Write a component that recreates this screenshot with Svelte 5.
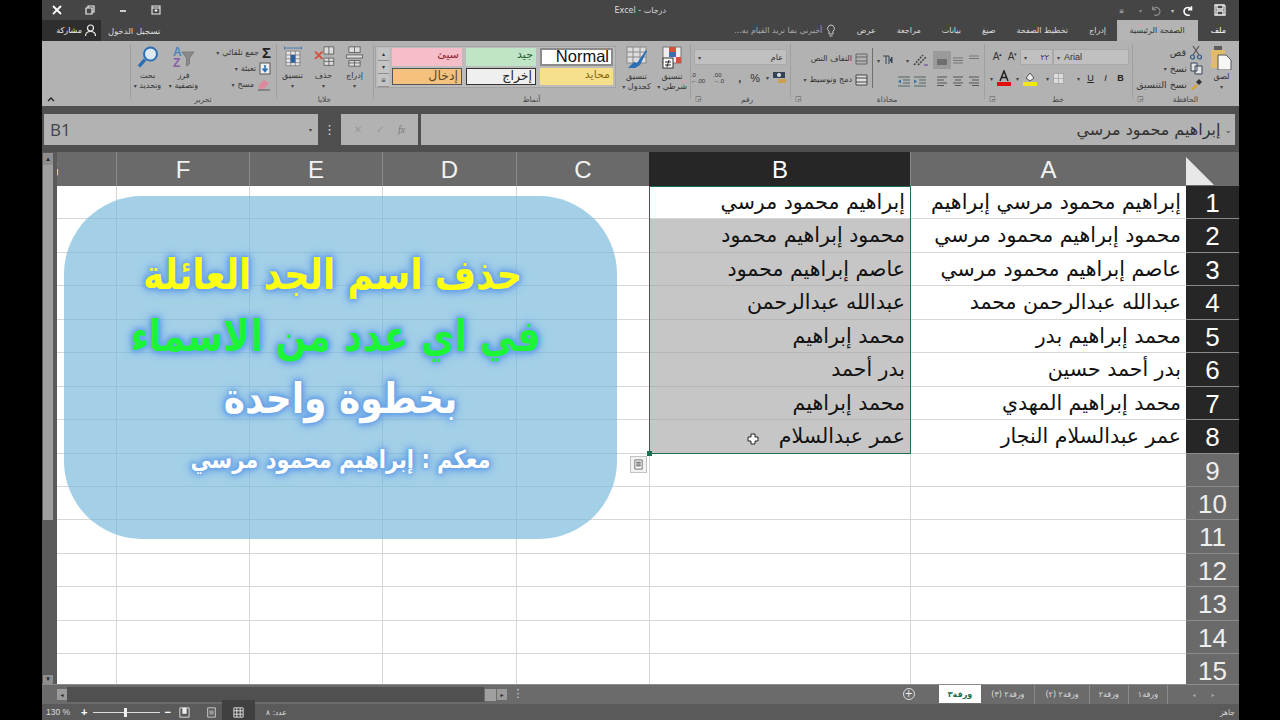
<script>
	const tabs = ["الصفحة الرئيسية", "إدراج", "تخطيط الصفحة", "صيغ", "بيانات", "مراجعة", "عرض"];
	const colsRtl = [
		{ name: "A", width: 276 },
		{ name: "B", width: 261, selected: true },
		{ name: "C", width: 133 },
		{ name: "D", width: 134 },
		{ name: "E", width: 133 },
		{ name: "F", width: 133 },
		{ name: "G", width: 133 },
	];
	const names = [
		["إبراهيم محمود مرسي إبراهيم", "إبراهيم محمود مرسي"],
		["محمود إبراهيم محمود مرسي", "محمود إبراهيم محمود"],
		["عاصم إبراهيم محمود مرسي", "عاصم إبراهيم محمود"],
		["عبدالله عبدالرحمن محمد", "عبدالله عبدالرحمن"],
		["محمد إبراهيم بدر", "محمد إبراهيم"],
		["بدر أحمد حسين", "بدر أحمد"],
		["محمد إبراهيم المهدي", "محمد إبراهيم"],
		["عمر عبدالسلام النجار", "عمر عبدالسلام"],
	];
	const rows = Array.from({ length: 15 }, (_, i) => i + 1);
	const sheets = ["ورقة١", "ورقة٢", "ورقة٢ (٢)", "ورقة٢ (٣)"];
	const styleCells = [
		{ label: "Normal", cls: "normal" },
		{ label: "جيد", cls: "good" },
		{ label: "سيئ", cls: "bad" },
		{ label: "محايد", cls: "neutral" },
		{ label: "إخراج", cls: "output" },
		{ label: "إدخال", cls: "input" },
	];
</script>

<div class="stage">
	<div class="excel" dir="rtl">
		<header class="titlebar">
			<div class="qat">
				<svg width="14" height="14" viewBox="0 0 14 14"><path d="M2 2h9l1 1v9H2z M4 2v4h6V2 M4 12V8h6v4" fill="none" stroke="#eee" stroke-width="1.3"/></svg>
				<svg class="redo" width="14" height="13" viewBox="0 0 16 14"><path d="M12 6a4.500 4.500 0 1 0-2 6 M12 2v4H8" fill="none" stroke="#fff" stroke-width="1.8"/></svg>
				<span class="caret">▾</span>
				<svg class="undo" width="14" height="13" viewBox="0 0 16 14"><path d="M4 6a4.500 4.500 0 1 1 2 6 M4 2v4h4" fill="none" stroke="#888" stroke-width="1.400"/></svg>
				<span class="caret dim">▾</span>
				<span class="caret cust">≡</span>
			</div>
			<div class="doc">درجات - Excel</div>
			<div class="winbtns">
				<svg width="12" height="12" viewBox="0 0 12 12"><path d="M2 2h8v8H2z M2 4h8 M6 5v3 M4.500 6.500h3" fill="none" stroke="#eee" stroke-width="1.100"/></svg>
				<svg width="12" height="12" viewBox="0 0 12 12"><path d="M3 7h6" stroke="#eee" stroke-width="1.600"/></svg>
				<svg width="12" height="12" viewBox="0 0 12 12"><path d="M2 4h6v6H2z M4 4V2h6v6H8" fill="none" stroke="#eee" stroke-width="1.200"/></svg>
				<svg width="12" height="12" viewBox="0 0 12 12"><path d="M2 2l8 8M10 2l-8 8" stroke="#fff" stroke-width="1.800"/></svg>
			</div>
		</header>

		<nav class="tabsrow">
			<span class="tab file">ملف</span>
			{#each tabs as t, i}
				<span class="tab" class:active={i === 0}>{t}</span>
			{/each}
			<span class="tell">
				<svg width="10" height="13" viewBox="0 0 10 13"><path d="M5 1a3.500 3.500 0 0 0-2 6.300V10h4V7.300A3.500 3.500 0 0 0 5 1z M3.500 12h3" fill="none" stroke="#ccc"/></svg>
				أخبرني بما تريد القيام به...
			</span>
			<span class="signin">تسجيل الدخول</span>
			<span class="share">
				<svg width="13" height="13" viewBox="0 0 13 13"><circle cx="6.500" cy="4" r="3" fill="none" stroke="#eee" stroke-width="1.200"/><path d="M1.500 12c0-3 2-4.500 5-4.500s5 1.500 5 4.500" fill="none" stroke="#eee" stroke-width="1.200"/></svg>
				مشاركة
			</span>
		</nav>

		<section class="ribbon">
			<div class="group g-clip">
				<div class="body">
					<div class="big paste">
						<svg width="21" height="24" viewBox="0 0 21 24"><rect x="0" y="4" width="14" height="18" fill="#e0bb6a"/><rect x="3" y="0" width="8" height="4" fill="#5c5c5c"/><path d="M7 9h8l5 5v10H7z" fill="#f6f6f6" stroke="#555"/></svg>
						<span>لصق</span><span class="caret">▾</span>
					</div>
					<div class="stack">
						<div class="line">
							<svg width="14" height="15" viewBox="0 0 14 15"><path d="M4 1l6 9M10 1L4 10" stroke="#555" stroke-width="1.200"/><circle cx="3.500" cy="12" r="2" fill="none" stroke="#2f5a86" stroke-width="1.200"/><circle cx="10.500" cy="12" r="2" fill="none" stroke="#2f5a86" stroke-width="1.200"/></svg>
							قص
						</div>
						<div class="line">
							<svg width="13" height="13" viewBox="0 0 13 13"><path d="M1 1h6v8H1z M5 4h7v8H5z" fill="#e4e4e4" stroke="#345"/></svg>
							نسخ <span class="caret">▾</span>
						</div>
						<div class="line">
							<svg width="13" height="13" viewBox="0 0 13 13"><path d="M1 11l5-5 2 2-5 4z" fill="#d6a235"/><path d="M6 4l3-3 3 3-3 3z" fill="#333"/></svg>
							نسخ التنسيق
						</div>
					</div>
				</div>
				<div class="glabel">الحافظة</div>
				<span class="launcher">◲</span>
			</div>

			<div class="group g-font">
				<div class="body col">
					<div class="row r1">
						<div class="combo fontname"><span>Arial</span><span class="caret">▾</span></div>
						<div class="combo fontsize"><span>٢٢</span><span class="caret">▾</span></div>
						<span class="grow" dir="ltr">A<sup>▾</sup></span>
						<span class="grow" dir="ltr">A<sup>▴</sup></span>
					</div>
					<div class="row r2">
						<b class="fmt">B</b>
						<i class="fmt ital">I</i>
						<u class="fmt">U</u><span class="caret">▾</span>
						<svg class="bord" width="13" height="13" viewBox="0 0 13 13"><path d="M1.500 1.500h10v10h-10z M6.500 1.500v10 M1.500 6.500h10" fill="#ddd" stroke="#888" stroke-dasharray="1 1"/></svg>
						<span class="caret">▾</span>
						<svg class="fill" width="16" height="16" viewBox="0 0 16 16"><path d="M4 8l4-5 4 5-4 3z" fill="#eee" stroke="#555"/><rect x="1" y="12" width="14" height="4" fill="#f0e61e"/></svg>
						<span class="caret">▾</span>
						<svg width="16" height="16" viewBox="0 0 16 16"><path d="M4 11L8 1l4 10 M5.500 7.500h5" fill="none" stroke="#222" stroke-width="1.500"/><rect x="1" y="12" width="14" height="4" fill="#e01010"/></svg>
						<span class="caret">▾</span>
					</div>
				</div>
				<div class="glabel">خط</div>
				<span class="launcher">◲</span>
			</div>

			<div class="group g-align">
				<div class="body">
					<div class="align-grid">
						<div class="row r1a">
							<svg width="12" height="10" viewBox="0 0 12 10"><path d="M1 1h10M1 3.500h10" stroke="#777"/></svg>
							<svg width="12" height="10" viewBox="0 0 12 10"><path d="M1 3h10M1 5.500h10M1 8h10" stroke="#777"/></svg>
							<span class="on"><svg width="12" height="10" viewBox="0 0 12 10"><path d="M1 5h10M1 7h10M1 9h10" stroke="#444"/></svg></span>
							<svg class="orient" width="18" height="14" viewBox="0 0 18 14"><path d="M3 12L12 2 M7 12l8-8" stroke="#444" stroke-width="1.600" stroke-dasharray="2 1"/><path d="M13 12h4" stroke="#7a5ca8" stroke-width="1.400"/></svg>
							<span class="caret">▾</span>
							<svg class="rtl" width="12" height="10" viewBox="0 0 12 10"><path d="M1 1h6M4 1v8M7 1v8M10 2v6l-2-3z" stroke="#345" fill="#345"/></svg>
							<span class="caret">▾</span>
						</div>
						<div class="row r2a">
							<svg width="12" height="10" viewBox="0 0 12 10"><path d="M1 1h10M4 4h7M1 7h10M4 9.500h7" stroke="#555"/></svg>
							<svg width="12" height="10" viewBox="0 0 12 10"><path d="M1 1h10M3 4h6M1 7h10M3 9.500h6" stroke="#555"/></svg>
							<svg width="12" height="10" viewBox="0 0 12 10"><path d="M1 1h10M1 4h7M1 7h10M1 9.500h7" stroke="#555"/></svg>
							<svg class="indent first" width="14" height="11" viewBox="0 0 14 11"><path d="M1 1h12M6 4h7M6 7h7M1 10h12" stroke="#566"/><path d="M1 3.500v4l3-2z" fill="#2a6fb5"/></svg>
							<svg class="indent" width="14" height="11" viewBox="0 0 14 11"><path d="M1 1h12M6 4h7M6 7h7M1 10h12" stroke="#566"/><path d="M4 3.500v4l-3-2z" fill="#2a6fb5"/></svg>
						</div>
					</div>
					<div class="wrapcol">
						<div class="line">
							<svg width="13" height="12" viewBox="0 0 13 12"><path d="M1 1h11v10H1z M1 4h11 M1 8h11" fill="none" stroke="#666"/></svg>
							التفاف النص
						</div>
						<div class="line">
							<svg width="13" height="12" viewBox="0 0 13 12"><path d="M1 1h11v10H1z M1 4h11 M1 8h11" fill="#ddd" stroke="#444"/></svg>
							دمج وتوسيط <span class="caret">▾</span>
						</div>
					</div>
				</div>
				<div class="glabel">محاذاة</div>
				<span class="launcher">◲</span>
			</div>

			<div class="group g-num">
				<div class="body col">
					<div class="combo numfmt"><span>عام</span><span class="caret">▾</span></div>
					<div class="row r2n">
						<svg width="15" height="13" viewBox="0 0 15 13"><rect x="1" y="1" width="12" height="6" fill="#345"/><circle cx="7" cy="4" r="2" fill="#dde"/><rect x="6" y="8" width="8" height="4" fill="#cda14b"/></svg>
						<span class="caret">▾</span>
						<span class="pct">%</span>
						<span class="comma">,</span>
						<span class="dec">.00<br />→.0</span>
						<span class="dec">.0<br />←.00</span>
					</div>
				</div>
				<div class="glabel">رقم</div>
				<span class="launcher">◲</span>
			</div>

			<div class="group g-style">
				<div class="body">
					<div class="big cf">
						<svg width="20" height="23" viewBox="0 0 20 23"><rect x="1" y="1" width="18" height="16" fill="#eee" stroke="#777"/><rect x="7" y="1" width="7" height="5" fill="#d0533a"/><rect x="7" y="6" width="7" height="5" fill="#3d6eb0"/><rect x="14" y="11" width="5" height="6" fill="#d0533a"/><rect x="1" y="12" width="10" height="10" fill="#fff" stroke="#333"/><path d="M3 16h6M3 19h6M7 14l-2 7" stroke="#222"/></svg>
						<span>تنسيق</span><span>شرطي <span class="caret">▾</span></span>
					</div>
					<div class="big ft">
						<svg width="22" height="23" viewBox="0 0 22 23"><rect x="1" y="1" width="19" height="16" fill="#ddd" stroke="#888"/><path d="M1 6h19M1 11h19M7 1v16M14 1v16" stroke="#888"/><path d="M2 22l6-6 3 1 9-13 1 1-7 14-5 3z" fill="#2a6fb5"/></svg>
						<span>تنسيق</span><span>كجدول <span class="caret">▾</span></span>
					</div>
					<div class="gallery">
						<div class="cells">
							{#each styleCells as c}
								<div class="cellstyle {c.cls}">{c.label}</div>
							{/each}
						</div>
						<div class="galscroll">
							<span>▴</span><span>▾</span><span>≡</span>
						</div>
					</div>
				</div>
				<div class="glabel">أنماط</div>
			</div>

			<div class="group g-cells">
				<div class="body">
					<div class="big cellbtn">
						<svg width="21" height="21" viewBox="0 0 26 26"><path d="M6 1h14v7H6z M13 1v7 M3 11h20v4H3z M6 18h14v7H6z M13 18v7 M6 21h14" fill="#ddd" stroke="#555"/></svg>
						<span>إدراج</span><span class="caret">▾</span>
					</div>
					<div class="big cellbtn">
						<svg width="22" height="21" viewBox="0 0 26 26"><path d="M13 1h12v9H13z M19 1v9 M13 15h12v9H13z M19 15v9 M13 19h12" fill="#ddd" stroke="#555"/><path d="M2 7l9 9M11 7l-9 9" stroke="#d0533a" stroke-width="2.400"/></svg>
						<span>حذف</span><span class="caret">▾</span>
					</div>
					<div class="big cellbtn">
						<svg width="20" height="21" viewBox="0 0 26 26"><path d="M4 6h18v19H4z M4 11h18 M4 16h18 M4 21h18 M10 6v19 M16 6v19" fill="#e5e5e5" stroke="#777"/><rect x="10" y="11" width="6" height="10" fill="#2a5f9e"/><path d="M2 2h22M2 0v4M24 0v4" stroke="#2a6fb5"/></svg>
						<span>تنسيق</span><span class="caret">▾</span>
					</div>
				</div>
				<div class="glabel">خلايا</div>
			</div>

			<div class="group g-edit">
				<div class="body">
					<div class="stack edit">
						<div class="line">
							<span class="sigma">Σ</span>
							جمع تلقائي <span class="caret">▾</span>
						</div>
						<div class="line">
							<svg width="12" height="13" viewBox="0 0 12 13"><rect x="1" y="1" width="10" height="11" fill="#eee" stroke="#555"/><path d="M6 3v6M3.500 6.500L6 9.500l2.500-3" stroke="#2a6fb5" stroke-width="1.600" fill="none"/></svg>
							تعبئة <span class="caret">▾</span>
						</div>
						<div class="line">
							<svg width="14" height="13" viewBox="0 0 14 13"><path d="M1 8l6-6 5 3-5 6H3z" fill="#dd8a9c"/><path d="M1 12h12" stroke="#555"/></svg>
							مسح <span class="caret">▾</span>
						</div>
					</div>
					<div class="big sort">
						<svg width="22" height="22" viewBox="0 0 22 22" dir="ltr"><text x="0" y="10" class="az a">A</text><text x="0" y="21" class="az z">Z</text><path d="M9 6h12l-4.500 6v6l-3 2v-8z" fill="#8a8a8a" stroke="#666" stroke-width="0.600"/></svg>
						<span>فرز</span><span>وتصفية <span class="caret">▾</span></span>
					</div>
					<div class="big find">
						<svg width="22" height="22" viewBox="0 0 22 22"><circle cx="13.500" cy="8" r="6.500" fill="#dfe9f2" stroke="#2a6fb5" stroke-width="2"/><path d="M8 13.500l-6 7" stroke="#2a6fb5" stroke-width="3.400"/></svg>
						<span>بحث</span><span>وتحديد <span class="caret">▾</span></span>
					</div>
				</div>
				<div class="glabel">تحرير</div>
			</div>

			<svg class="collapse" width="8" height="6" viewBox="0 0 8 6"><path d="M1 5l3-3 3 3" fill="none" stroke="#222" stroke-width="1.400"/></svg>
		</section>

		<section class="formulabar">
			<div class="fx-input">
				<span class="fx-text">إبراهيم محمود مرسي</span>
				<span class="caret">⌄</span>
			</div>
			<div class="fx-btns">
				<span class="fx">fx</span><span>✓</span><span>✕</span>
			</div>
			<div class="fx-dots">⋮</div>
			<div class="namebox" dir="ltr"><span>B1</span><span class="caret">▾</span></div>
		</section>

		<section class="sheet">
			<div class="gridwrap">
				<div class="colhead">
					<div class="corner"><i></i></div>
					{#each colsRtl as c}
						<div class="ch" class:sel={c.selected} style="width:{c.width}px">{c.name}</div>
					{/each}
				</div>
				<div class="rows">
					{#each rows as r}
						<div class="rw">
							<div class="rh" class:sel={r <= 8}>{r}</div>
							<div class="c a" style="width:{colsRtl[0].width}px">{names[r - 1]?.[0] ?? ""}</div>
							<div
								class="c b"
								class:filled={r >= 2 && r <= 8}
								style="width:{colsRtl[1].width}px"
							>{names[r - 1]?.[1] ?? ""}</div>
							{#each colsRtl.slice(2) as c}
								<div class="c" style="width:{c.width}px"></div>
							{/each}
						</div>
					{/each}
				</div>

				<div class="selbox"><i></i></div>
				<svg class="cursor" width="12" height="12" viewBox="0 0 12 12"><path d="M4 1h4v3h3v4H8v3H4V8H1V4h3z" fill="#fff" stroke="#222"/></svg>
				<div class="flash">
					<svg width="11" height="11" viewBox="0 0 12 12"><path d="M2 1h8v10H2z" fill="#fff" stroke="#666"/><path d="M3.500 3.500h5M3.500 5.500h5M3.500 7.500h5" stroke="#333"/></svg>
				</div>

				<div class="shape">
					<p class="t1">حذف اسم الجد العائلة</p>
					<p class="t2">في اي عدد من الاسماء</p>
					<p class="t3">بخطوة واحدة</p>
					<p class="t4">معكم : إبراهيم محمود مرسي</p>
				</div>
			</div>

			<aside class="vscroll" dir="ltr">
				<span class="sbtn">▴</span>
				<div class="vthumb"></div>
				<span class="sbtn end">▾</span>
			</aside>
		</section>

		<section class="sheettabs">
			<div class="nav"><span>▸</span><span>◂</span></div>
			{#each sheets as s}
				<span class="sheet-tab" class:wide={s.length > 5}>{s}</span>
			{/each}
			<span class="sheet-tab current">ورقة٣</span>
			<span class="plus">+</span>
			<span class="hdots">⋮</span>
			<div class="hscroll">
				<span class="btn">▸</span>
				<div class="hthumb"></div>
				<div class="htrack"></div>
				<span class="btn">◂</span>
			</div>
		</section>

		<footer class="status">
			<span class="ready">جاهز</span>
			<span class="count">عدد: ٨</span>
			<div class="views">
				<span class="view on"><svg width="13" height="13" viewBox="0 0 13 13"><path d="M1 1h11v11H1z M1 4.500h11M1 8.500h11M4.500 1v11M8.500 1v11" fill="none" stroke="#eee"/></svg></span>
				<span class="view"><svg width="13" height="13" viewBox="0 0 13 13"><path d="M2 1h9v11H2z" fill="none" stroke="#ddd"/><rect x="4" y="4" width="5" height="5" fill="#999"/></svg></span>
				<span class="view"><svg width="13" height="13" viewBox="0 0 13 13"><path d="M1 1h11v11H1z" fill="none" stroke="#eee"/><rect x="4" y="1" width="5" height="7" fill="#eee"/></svg></span>
			</div>
			<div class="zoom" dir="ltr">
				<span class="pctlabel">130 %</span>
				<b>+</b>
				<div class="slider"><i></i></div>
				<b>−</b>
			</div>
		</footer>
	</div>
</div>

<style>
	:global(body) {
		margin: 0;
		background: #000;
	}
	.stage {
		width: 1280px;
		height: 720px;
		padding: 0 41px 0 42px;
		box-sizing: border-box;
		background: #000;
		overflow: hidden;
	}
	.excel {
		width: 1197px;
		height: 720px;
		display: flex;
		flex-direction: column;
		background: #454545;
		font-family: "DejaVu Sans", "Liberation Sans", sans-serif;
		color: #222;
	}
	svg {
		display: block;
		flex: none;
	}
	.caret {
		font-size: 6px;
		color: #444;
	}

	/* title bar */
	.titlebar {
		height: 20px;
		flex: none;
		display: flex;
		align-items: center;
		justify-content: space-between;
		padding: 0 12px 0 9px;
		position: relative;
		color: #ddd;
		font-size: 8px;
	}
	.qat {
		display: flex;
		align-items: center;
		gap: 7px;
		direction: rtl;
	}
	.qat .caret {
		color: #ccc;
	}
	.qat .redo {
		margin-right: 11px;
	}
	.qat .undo {
		margin-right: 1px;
	}
	.qat .caret.dim {
		color: #888;
	}
	.qat .cust {
		margin-right: 8px;
	}
	.doc {
		position: absolute;
		left: 574px;
		width: 50px;
		white-space: nowrap;
		text-align: center;
	}
	.winbtns {
		display: flex;
		gap: 21px;
	}

	/* tabs */
	.tabsrow {
		height: 21px;
		flex: none;
		display: flex;
		align-items: center;
		font-size: 8px;
		color: #ddd;
		white-space: nowrap;
	}
	.tab {
		padding: 0 10.500px;
		height: 100%;
		display: flex;
		align-items: center;
	}
	.tab.file {
		padding: 0 13px;
		color: #fff;
	}
	.tab.active {
		background: #b4b4b4;
		color: #333;
		padding: 0 13px;
	}
	.tell {
		display: flex;
		align-items: center;
		gap: 4px;
		margin-right: 10px;
		color: #aaa;
	}
	.signin {
		margin-right: auto;
		padding-left: 7px;
		color: #ddd;
		font-size: 8.500px;
	}
	.share {
		display: flex;
		align-items: center;
		gap: 2px;
		height: 100%;
		width: 59px;
		box-sizing: border-box;
		padding-right: 4px;
		background: #2e2e2e;
		color: #eee;
	}

	/* ribbon */
	.ribbon {
		height: 65px;
		flex: none;
		display: flex;
		background: #b2b2b2;
		font-size: 8px;
		color: #333;
		white-space: nowrap;
		position: relative;
	}
	.group {
		display: flex;
		flex-direction: column;
		position: relative;
		box-sizing: border-box;
		flex: none;
	}
	.group::after {
		content: "";
		position: absolute;
		left: 0;
		top: 3px;
		bottom: 7px;
		width: 1px;
		background: #a0a0a0;
	}
	.body {
		flex: 1;
		display: flex;
		min-height: 0;
	}
	.body.col {
		flex-direction: column;
	}
	.glabel {
		height: 13px;
		flex: none;
		text-align: center;
		font-size: 7.500px;
		line-height: 13px;
		color: #444;
	}
	.launcher {
		position: absolute;
		left: 5px;
		bottom: 2px;
		font-size: 7px;
		line-height: 10px;
		color: #555;
	}
	.g-clip { width: 107px; }
	.g-font { width: 148px; }
	.g-align { width: 194px; }
	.g-num { width: 100px; }
	.g-num .glabel { padding-left: 14px; }
	.g-style { width: 317px; }
	.g-cells { width: 97px; }
	.g-edit { width: 146px; }
	.collapse {
		position: absolute;
		left: 5px;
		bottom: 4px;
	}
	.big {
		display: flex;
		flex-direction: column;
		align-items: center;
		padding-top: 5px;
		line-height: 10px;
	}
	.big svg {
		margin-bottom: 3px;
	}
	.stack {
		display: flex;
		flex-direction: column;
		padding-top: 3px;
	}
	.line {
		display: flex;
		align-items: center;
		gap: 3px;
		height: 16.500px;
	}
	.paste {
		width: 35px;
		padding-top: 5px;
		flex: none;
	}
	.paste svg {
		margin-bottom: 2px;
	}
	.g-clip .stack {
		padding-right: 1px;
		font-size: 9.500px;
	}
	.row {
		display: flex;
		align-items: center;
	}
	.combo {
		display: flex;
		align-items: center;
		justify-content: space-between;
		background: #c0c0c0;
		box-sizing: border-box;
		height: 16px;
		padding: 0 3px;
		font-size: 8px;
		border: 1px solid #a9a9a9;
		flex: none;
	}
	.r1 {
		margin-top: 8px;
		padding-right: 3px;
		height: 16px;
	}
	.fontname {
		width: 76px;
		direction: ltr;
		flex-direction: row-reverse;
		gap: 4px;
		justify-content: flex-end;
		font-family: "Liberation Sans", sans-serif;
		font-size: 9px;
	}
	.fontsize {
		width: 33px;
	}
	.grow {
		font-family: "Liberation Sans", sans-serif;
		font-size: 10px;
		width: 15px;
		text-align: center;
		flex: none;
	}
	.grow sup {
		font-size: 5px;
	}
	.r2 {
		margin-top: 5px;
		padding-right: 4px;
		height: 16px;
		font-family: "Liberation Sans", sans-serif;
		font-size: 10px;
	}
	.fmt {
		color: #222;
		font-size: 9px;
		width: 15px;
		text-align: center;
		flex: none;
	}
	.r2 .caret {
		width: 10px;
		text-align: center;
		flex: none;
	}
	.bord {
		margin-right: 8px;
	}
	.fill {
		margin-right: 4px;
	}
	.align-grid {
		width: 112px;
		flex: none;
		padding: 4px 4px 0 0;
		box-sizing: border-box;
		border-left: 1px solid #6f6f6f;
		height: 40px;
		margin-top: 7px;
	}
	.r1a,
	.r2a {
		gap: 4px;
		height: 16px;
	}
	.r2a {
		margin-top: 5px;
	}
	.on {
		background: #9a9a9a;
		padding: 4px 3px;
		margin: 0 -3px;
	}
	.orient {
		margin-right: 3px;
	}
	.r1a .caret {
		margin-right: -2px;
	}
	.rtl {
		margin-right: 8px;
	}
	.indent {
		margin-right: -2px;
	}
	.indent.first {
		margin-right: 5px;
	}
	.wrapcol {
		padding: 7px 4px 0 0;
	}
	.wrapcol .line {
		height: 21px;
	}
	.numfmt {
		width: 93px;
		margin: 8px 3px 0 0;
		font-size: 8px;
	}
	.r2n {
		margin-top: 6px;
		padding-right: 3px;
		gap: 3px;
	}
	.pct {
		font-family: "Liberation Sans", sans-serif;
		font-size: 11px;
		margin-right: 3px;
	}
	.comma {
		font-family: "Liberation Sans", sans-serif;
		font-weight: bold;
		font-size: 11px;
		margin: 0 6px;
	}
	.dec {
		font-family: "Liberation Sans", sans-serif;
		font-size: 6px;
		line-height: 6px;
		margin-right: 5px;
		direction: ltr;
	}
	.cf {
		width: 36px;
		flex: none;
	}
	.ft {
		width: 35px;
		flex: none;
	}
	.gallery {
		display: flex;
		height: 42px;
		margin: 5px 3px 0 0;
		padding: 1px 2px;
		background: #bcbcbc;
		border: 1px solid #a3a3a3;
		box-sizing: border-box;
	}
	.cells {
		display: grid;
		grid-template-columns: 73px 70px 70px;
		grid-template-rows: 17.500px 17.500px;
		gap: 2px 4px;
	}
	.cellstyle {
		font-size: 11px;
		padding: 0 3px;
		line-height: 14px;
		box-sizing: border-box;
		overflow: hidden;
	}
	.normal {
		background: #fff;
		color: #111;
		font-family: "Liberation Sans", sans-serif;
		font-size: 16.500px;
		border: 2px solid #8b8b8b;
		line-height: 12px;
		padding: 0 2px;
	}
	.good { background: #bfe4c6; color: #245c2d; }
	.bad { background: #f6bec8; color: #8f1f30; }
	.neutral { background: #f5df8a; color: #8a6a10; }
	.output { background: #efefef; color: #222; border: 1px solid #333; font-size: 12.500px; line-height: 13px; }
	.input { background: #f4c27e; color: #5a4a2a; border: 1px solid #555; font-size: 12.500px; line-height: 13px; }
	.galscroll {
		display: flex;
		flex-direction: column;
		width: 11px;
		margin-right: 3px;
		font-size: 6px;
		text-align: center;
	}
	.galscroll span {
		flex: 1;
		line-height: 12px;
		background: #c4c4c4;
		border-bottom: 1px solid #8f8f8f;
	}
	.cellbtn {
		width: 31px;
		padding-top: 5px;
		flex: none;
	}
	.cellbtn svg {
		margin-bottom: 4px;
	}
	.g-cells .body {
		padding-right: 3px;
	}
	.edit {
		width: 74px;
		flex: none;
		box-sizing: border-box;
		padding-right: 5px;
		padding-top: 3px;
	}
	.sigma {
		font-family: "Liberation Sans", sans-serif;
		font-size: 15px;
		font-weight: bold;
		line-height: 13px;
		color: #222;
	}
	.sort {
		width: 37px;
		flex: none;
	}
	.find {
		width: 35px;
		flex: none;
	}
	.az {
		font-family: "Liberation Sans", sans-serif;
		font-size: 12px;
		font-weight: bold;
		direction: ltr;
	}
	.a { fill: #4a86c0; }
	.z { fill: #8a5ca8; }

	/* formula bar */
	.formulabar {
		height: 46px;
		flex: none;
		box-sizing: border-box;
		background: #4f4f4f;
		padding: 8px 4px 7px 2px;
		display: flex;
		gap: 3px;
	}
	.fx-input,
	.fx-btns,
	.namebox {
		background: #b2b2b2;
		box-sizing: border-box;
		display: flex;
		align-items: center;
	}
	.fx-input {
		flex: 1;
		padding: 0 3px 0 0;
		font-size: 16px;
		color: #333;
	}
	.fx-text {
		order: 1;
		margin-right: 1px;
	}
	.fx-input .caret {
		order: 0;
		font-size: 9px;
		margin-left: 3px;
	}
	.fx-btns {
		width: 77px;
		justify-content: space-around;
		padding: 0 6px;
		font-size: 10px;
		color: #999;
		flex: none;
	}
	.fx {
		font-family: "Liberation Serif", serif;
		font-style: italic;
		color: #777;
	}
	.fx-dots {
		width: 17px;
		text-align: center;
		color: #ddd;
		font-size: 13px;
		line-height: 31px;
		flex: none;
	}
	.namebox {
		width: 274px;
		flex: none;
		justify-content: space-between;
		padding: 0 6px;
		font-family: "Open Sans", sans-serif;
		font-size: 17px;
		color: #444;
	}

	/* sheet */
	.sheet {
		flex: 1;
		min-height: 0;
		display: flex;
		background: #fff;
		overflow: hidden;
	}
	.gridwrap {
		flex: 1;
		position: relative;
		min-width: 0;
		overflow: hidden;
	}
	.colhead {
		display: flex;
		height: 34px;
		background: #6a6a6a;
	}
	.corner {
		width: 53px;
		box-sizing: border-box;
		flex: none;
		padding: 5px 0 0 0;
	}
	.corner i {
		display: block;
		width: 28px;
		height: 28px;
		margin-right: 25px;
		background: #e8e8e8;
		clip-path: polygon(0 0, 100% 100%, 0 100%);
	}
	.ch {
		flex: none;
		box-sizing: border-box;
		border-left: 1px solid #8a8a8a;
		text-align: center;
		color: #f2f2f2;
		font-family: "Liberation Sans", sans-serif;
		font-size: 24px;
		line-height: 35px;
	}
	.ch.sel {
		background: #262626;
		color: #fff;
		border-left-color: #262626;
	}
	.rw {
		display: flex;
		height: 33.450px;
	}
	.rh {
		width: 53px;
		flex: none;
		box-sizing: border-box;
		background: #6a6a6a;
		color: #eee;
		border-bottom: 1px solid #8a8a8a;
		font-family: "Liberation Sans", sans-serif;
		font-size: 26px;
		line-height: 34px;
		text-align: center;
		direction: ltr;
	}
	.rh.sel {
		background: #262626;
		color: #fff;
	}
	.c {
		flex: none;
		box-sizing: border-box;
		border-left: 1px solid #d6d6d6;
		border-bottom: 1px solid #d6d6d6;
		font-size: 20.500px;
		line-height: 33px;
		color: #111;
		padding-right: 5px;
		white-space: nowrap;
		overflow: hidden;
	}
	.c.filled {
		background: #c6c6c6;
		border-bottom-color: #b6b6b6;
		border-left-color: #c6c6c6;
	}
	.selbox {
		position: absolute;
		top: 34px;
		right: 328px;
		width: 262px;
		height: 268px;
		border: 1px solid #1f6e50;
		box-sizing: border-box;
		pointer-events: none;
	}
	.selbox i {
		position: absolute;
		left: -3px;
		bottom: -3px;
		width: 5px;
		height: 5px;
		background: #1f6e50;
	}
	.cursor {
		position: absolute;
		top: 281px;
		left: 690px;
	}
	.flash {
		position: absolute;
		left: 573px;
		top: 304px;
		width: 17px;
		height: 17px;
		box-sizing: border-box;
		border: 1px solid #c4c4c4;
		background: #f2f2f2;
		padding: 2px;
	}
	.shape {
		position: absolute;
		left: 7px;
		top: 44px;
		width: 553px;
		height: 343px;
		border-radius: 78px;
		background: rgba(116, 182, 218, 0.66);
		box-sizing: border-box;
		padding-top: 48px;
		text-align: center;
		font-weight: bold;
	}
	.shape p {
		margin: 0;
		white-space: nowrap;
		transform: scaleY(1.18);
		text-shadow: 0 0 3px #6aa4e8, 0 0 4px #6aa4e8, 0 0 6px #6aa4e8, 0 0 8px #6aa4e8, 0 0 9px #6aa4e8;
	}
	.shape .t1 {
		color: #ffff14;
		font-size: 35.500px;
		height: 62px;
		line-height: 62px;
		margin-left: -16px;
	}
	.shape .t2 {
		color: #1cf536;
		font-size: 36.500px;
		height: 62px;
		line-height: 62px;
		margin-left: -10px;
	}
	.shape .t3 {
		color: #fff;
		font-size: 36px;
		height: 62px;
		line-height: 62px;
	}
	.shape .t4 {
		color: #fff;
		font-size: 21px;
		height: 50px;
		line-height: 50px;
		margin-top: 5px;
	}
	.vscroll {
		width: 15px;
		flex: none;
		box-sizing: border-box;
		background: #5a5a5a;
		display: flex;
		flex-direction: column;
		align-items: center;
		padding: 1px 4px 0 1px;
	}
	.sbtn {
		width: 10px;
		flex: none;
		font-size: 7px;
		color: #222;
		background: #8e8e8e;
		height: 12px;
		line-height: 12px;
		text-align: center;
	}
	.sbtn.end {
		margin-top: auto;
		height: 9px;
		line-height: 9px;
	}
	.vthumb {
		width: 10px;
		height: 355px;
		background: #9f9f9f;
	}

	/* sheet tabs */
	.sheettabs {
		height: 20px;
		flex: none;
		background: #6b6b6b;
		border-top: 1px solid #8c8c8c;
		box-sizing: border-box;
		display: flex;
		align-items: stretch;
		font-size: 8px;
		color: #ddd;
		white-space: nowrap;
	}
	.nav {
		width: 71px;
		flex: none;
		display: flex;
		justify-content: center;
		align-items: center;
		gap: 16px;
		font-size: 6px;
		color: #aaa;
	}
	.sheet-tab {
		display: flex;
		align-items: center;
		padding: 0 9px;
		border-right: 1px solid #8a8a8a;
	}
	.sheet-tab.wide {
		padding: 0 10px;
	}
	.sheet-tab.current {
		background: #fff;
		color: #1f6e50;
		border-right: none;
		padding: 0 9px;
		margin-bottom: 1px;
		font-weight: bold;
	}
	.plus {
		width: 12px;
		height: 12px;
		box-sizing: border-box;
		border: 1px solid #ddd;
		border-radius: 50%;
		font-size: 10px;
		line-height: 9px;
		text-align: center;
		margin: 3px 24px 0 0;
		color: #eee;
	}
	.hdots {
		margin-right: auto;
		width: 22px;
		text-align: center;
		font-size: 11px;
		line-height: 18px;
		color: #ddd;
	}
	.hscroll {
		width: 450px;
		margin-left: 15px;
		flex: none;
		display: flex;
		align-items: center;
	}
	.btn {
		width: 10px;
		height: 11px;
		background: #9a9a9a;
		color: #222;
		font-size: 6px;
		line-height: 11px;
		text-align: center;
		flex: none;
	}
	.hthumb {
		width: 11px;
		height: 12px;
		margin: 0 1px;
		background: #a0a0a0;
		flex: none;
	}
	.htrack {
		flex: 1;
		height: 15px;
		background: #505050;
	}

	/* status */
	.status {
		height: 16px;
		flex: none;
		background: #5a5a5a;
		display: flex;
		align-items: center;
		font-size: 7.500px;
		color: #ddd;
		white-space: nowrap;
	}
	.ready {
		padding-right: 4px;
	}
	.count {
		margin-right: auto;
		margin-left: 14px;
	}
	.views {
		display: flex;
		align-items: center;
	}
	.view {
		width: 27px;
		height: 16px;
		display: flex;
		align-items: center;
		justify-content: center;
	}
	.view svg {
		width: 11px;
		height: 11px;
	}
	.view.on {
		background: #404040;
	}
	.zoom {
		display: flex;
		align-items: center;
		gap: 5px;
		padding-left: 4px;
		width: 129px;
		box-sizing: border-box;
		font-family: "Liberation Sans", sans-serif;
		font-size: 8.500px;
	}
	.pctlabel {
		margin-right: 6px;
	}
	.zoom b {
		color: #fff;
		font-size: 11px;
		line-height: 10px;
	}
	.slider {
		width: 68px;
		height: 1px;
		background: #ddd;
		position: relative;
	}
	.slider i {
		position: absolute;
		left: 31px;
		top: -4px;
		width: 3px;
		height: 9px;
		background: #eee;
	}
</style>
